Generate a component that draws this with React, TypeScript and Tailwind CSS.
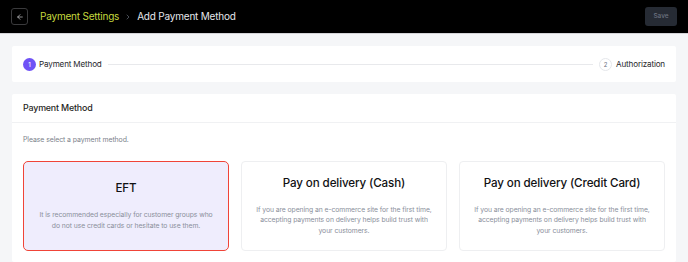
import { ArrowLeft, ChevronRight } from "lucide-react";

const methods = [
  {
    id: "eft",
    title: "EFT",
    desc: "It is recommended especially for customer groups who do not use credit cards or hesitate to use them.",
  },
  {
    id: "cash",
    title: "Pay on delivery (Cash)",
    desc: "If you are opening an e-commerce site for the first time, accepting payments on delivery helps build trust with your customers.",
  },
  {
    id: "card",
    title: "Pay on delivery (Credit Card)",
    desc: "If you are opening an e-commerce site for the first time, accepting payments on delivery helps build trust with your customers.",
  },
];

export default function App() {
  const selected = "eft";

  return (
    <div className="min-h-screen bg-[#f5f6f8] font-['Inter','Liberation_Sans',sans-serif]">
      {/* top bar */}
      <header className="h-[34px] bg-black border-b border-[#d4d4d8] flex items-center px-[11px]">
        <button className="w-[17px] h-[17px] rounded-[3px] border border-[#3a3a3c] flex items-center justify-center text-[#d4d4d8]">
          <ArrowLeft size={8} strokeWidth={2} />
        </button>
        <nav className="ml-3 flex items-center gap-[5px] text-[10px] tracking-[-0.02em]">
          <span className="text-[#c6d93e]">Payment Settings</span>
          <ChevronRight size={8} className="text-[#6b7280]" />
          <span className="text-[#e5e7eb]">Add Payment Method</span>
        </nav>
        <button className="ml-auto w-[32px] h-[19px] rounded-[3px] bg-[#262b34] text-[#6b7280] text-[6.5px] font-medium">
          Save
        </button>
      </header>

      <main className="p-3 flex flex-col gap-3">
        {/* stepper */}
        <div className="h-[36px] bg-white rounded-[2px] px-[11px] flex items-center text-[#27272a] text-[8.1px] tracking-[-0.02em]">
          <span className="w-[13px] h-[13px] rounded-full bg-[#6f52f6] text-white text-[6px] font-medium flex items-center justify-center">
            1
          </span>
          <span className="ml-[3px]">Payment Method</span>
          <div className="flex-1 h-px bg-[#e8e9ec] mx-[6px]" />
          <span className="w-[13px] h-[13px] rounded-full border border-[#e5e7eb] text-[#6b7280] text-[6px] flex items-center justify-center">
            2
          </span>
          <span className="ml-[4px]">Authorization</span>
        </div>

        {/* payment method card */}
        <section className="bg-white rounded-[2px]">
          <div className="h-[29px] px-[11px] flex items-center border-b border-[#f0f1f3] text-[8.9px] tracking-[-0.02em] font-medium text-[#1f1f23]">
            Payment Method
          </div>
          <div className="px-[11px] pt-[11px] pb-[11px]">
            <p className="text-[6.9px] tracking-[-0.01em] leading-[12px] text-[#7b7f8a]">Please select a payment method.</p>
            <div className="mt-[15px] grid grid-cols-3 gap-3">
              {methods.map((m) => {
                const active = m.id === selected;
                return (
                  <div
                    key={m.id}
                    className={
                      active
                        ? "h-[90px] rounded-[5px] border-[1.5px] border-[#f04438] bg-[#efedfd] flex flex-col items-center justify-center px-[14px] text-center"
                        : "h-[90px] rounded-[4px] border border-[#eeeff1] bg-white flex flex-col items-center justify-center px-[14px] text-center"
                    }
                  >
                    <h3 className="text-[11.6px] leading-[15px] tracking-[-0.01em] font-medium text-[#111113]">{m.title}</h3>
                    <p className="mt-[14px] text-[6.8px] leading-[10.3px] tracking-[-0.01em] text-[#8a8f9b]">{m.desc}</p>
                  </div>
                );
              })}
            </div>
          </div>
        </section>
      </main>
    </div>
  );
}
